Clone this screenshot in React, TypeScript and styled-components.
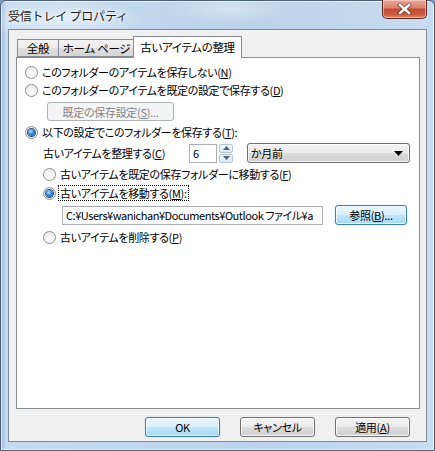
import React from "react";
import styled, { createGlobalStyle } from "styled-components";

const Global = createGlobalStyle`
  html, body { margin: 0; padding: 0; background: #7d9bbd; }
  body { width: 435px; height: 451px; overflow: hidden; }
  * { box-sizing: border-box; }
`;

const UI = `"Noto Sans CJK JP", "Noto Sans", sans-serif`;

const Win = styled.div`
  width: 435px;
  height: 451px;
  display: flex;
  flex-direction: column;
  padding: 0 7px 8px 7px;
  border: 1px solid #4e6176;
  border-radius: 6px 6px 0 0;
  background:
    radial-gradient(ellipse 120px 30px at 60px 18px, rgba(255,255,255,0.55), rgba(255,255,255,0) 70%),
    radial-gradient(ellipse 90px 20px at 230px 8px, rgba(255,255,255,0.35), rgba(255,255,255,0) 70%),
    linear-gradient(90deg, #9fbcdc 0px, #c6dbef 5px, #bcd3ea 60%, #c8dcf0 100%);
  box-shadow: inset 0 0 0 1px rgba(255,255,255,0.6);
`;

const TitleBar = styled.div`
  height: 28px;
  display: flex;
  align-items: flex-start;
  justify-content: space-between;
`;

const Title = styled.div`
  font-family: ${UI};
  font-size: 12px;
  color: #1b1b1b;
  padding-top: 6px;
  text-shadow: 0 0 6px #ffffff, 0 0 3px #ffffff;
  letter-spacing: -0.2px;
`;

const CloseBtn = styled.div`
  width: 45px;
  height: 19px;
  margin-top: -1px;
  border: 1px solid #5e2a22;
  border-top: none;
  border-radius: 0 0 5px 5px;
  background: linear-gradient(180deg, #e9a899 0%, #d9806d 45%, #c24a33 50%, #cc5a3f 80%, #e08a6a 100%);
  box-shadow: inset 0 0 0 1px rgba(255,220,210,0.55);
  display: flex;
  align-items: center;
  justify-content: center;
`;

const Client = styled.div`
  flex: 1;
  background: #f0f0f0;
  border: 1px solid #7f8b99;
  display: flex;
  flex-direction: column;
  padding: 6px 7px 0 7px;
`;

const TabStrip = styled.div`
  display: flex;
  align-items: flex-end;
  height: 21px;
  padding-left: 1px;
  position: relative;
  z-index: 1;
`;

const Tab = styled.div<{ $w: number; $active?: boolean }>`
  width: ${(p) => p.$w}px;
  height: ${(p) => (p.$active ? 22 : 18)}px;
  margin-bottom: ${(p) => (p.$active ? -1 : 0)}px;
  margin-left: ${(p) => (p.$active ? -1 : 0)}px;
  border: 1px solid #898c95;
  border-bottom: ${(p) => (p.$active ? "none" : "1px solid #898c95")};
  border-right-width: ${(p) => (p.$active ? 1 : 0)}px;
  background: ${(p) =>
    p.$active ? "#ffffff" : "linear-gradient(180deg, #f3f3f3 0%, #ebebeb 50%, #dedede 51%, #d6d6d6 100%)"};
  font-family: ${UI};
  font-size: 11.5px;
  letter-spacing: -0.3px;
  color: #000;
  display: flex;
  align-items: ${(p) => (p.$active ? "flex-start" : "center")};
  padding-top: ${(p) => (p.$active ? 2 : 0)}px;
  justify-content: center;
  font-feature-settings: "palt";
  white-space: nowrap;
  &:nth-child(2) { border-right-width: 0; }
`;

const Pane = styled.div`
  width: 404px;
  height: 352px;
  background: #ffffff;
  border: 1px solid #898c95;
  padding: 5px 0 0 8px;
  display: flex;
  flex-direction: column;
  font-family: ${UI};
  font-size: 11px;
  letter-spacing: -0.35px;
  color: #000;
  font-feature-settings: "palt";
`;

const Row = styled.div<{ $indent?: number; $mt?: number; $h?: number }>`
  display: flex;
  align-items: center;
  height: ${(p) => p.$h ?? 18}px;
  margin-left: ${(p) => p.$indent ?? 0}px;
  margin-top: ${(p) => p.$mt ?? 0}px;
  white-space: nowrap;
`;

const RadioCircle = styled.span<{ $on?: boolean }>`
  width: 13px;
  height: 13px;
  border-radius: 50%;
  flex: none;
  border: 1px solid #8f8f8f;
  background: radial-gradient(circle at 50% 60%, #ffffff 0%, #f4f4f4 40%, #d2d2d2 100%);
  box-shadow: inset 0 0 0 1px #f8f8f8;
  display: flex;
  align-items: center;
  justify-content: center;
  margin-right: 3px;
  &::after {
    content: "";
    display: ${(p) => (p.$on ? "block" : "none")};
    width: 7px;
    height: 7px;
    border-radius: 50%;
    background: radial-gradient(circle at 40% 35%, #b9e2ff 0%, #3c8fe0 40%, #0d4a8a 100%);
    box-shadow: 0 0 0 1px #1e4f85;
  }
`;

const Label = styled.span<{ $focus?: boolean }>`
  line-height: 14px;
  padding: 0 1px;
  outline: ${(p) => (p.$focus ? "1px dotted #000" : "none")};
`;

const Key = styled.span`
  text-decoration: underline;
  text-underline-offset: 1px;
`;

const PushButton = styled.div<{ $w: number; $kind?: "normal" | "default" | "disabled"; $h?: number; $ml?: number }>`
  width: ${(p) => p.$w}px;
  height: ${(p) => p.$h ?? 20}px;
  margin-left: ${(p) => p.$ml ?? 0}px;
  flex: none;
  border-radius: 3px;
  font-family: ${UI};
  font-size: 11px;
  letter-spacing: -0.3px;
  font-feature-settings: "palt";
  display: flex;
  align-items: center;
  justify-content: center;
  white-space: nowrap;
  ${(p) =>
    p.$kind === "disabled"
      ? `border: 1px solid #adb2b5; background: #f4f4f4; color: #838383;`
      : p.$kind === "default"
      ? `border: 1px solid #3c7fb1; color: #000; background: linear-gradient(180deg, #eaf6fd 0%, #d9f0fc 50%, #bee6fd 51%, #a7d9f5 100%); box-shadow: inset 0 0 0 1px rgba(255,255,255,0.7), 0 0 1px #48c7ff;`
      : `border: 1px solid #707070; color: #000; background: linear-gradient(180deg, #f2f2f2 0%, #ebebeb 50%, #dddddd 51%, #cfcfcf 100%); box-shadow: inset 0 0 0 1px rgba(255,255,255,0.8);`}
`;

const OrganizeLabel = styled.span`
  width: 146px;
  flex: none;
`;

const TextBox = styled.div<{ $w: number }>`
  width: ${(p) => p.$w}px;
  height: 19px;
  flex: none;
  border: 1px solid #abadb3;
  background: #fff;
  display: flex;
  align-items: center;
  padding-left: 3px;
  overflow: hidden;
  white-space: nowrap;
`;

const PathText = styled.span`
  font-size: 11px;
  letter-spacing: -0.45px;
`;

const Spinner = styled.div`
  width: 14px;
  height: 19px;
  margin-left: 2px;
  flex: none;
  display: flex;
  flex-direction: column;
  gap: 1px;
`;

const SpinPart = styled.div`
  flex: 1;
  border: 1px solid #b5c4d6;
  border-radius: 2px;
  background: linear-gradient(180deg, #f3f8fc 0%, #dbe8f4 100%);
  display: flex;
  align-items: center;
  justify-content: center;
`;

const Combo = styled.div`
  width: 163px;
  height: 20px;
  margin-left: 14px;
  flex: none;
  border: 1px solid #707070;
  border-radius: 3px;
  background: linear-gradient(180deg, #f2f2f2 0%, #ebebeb 50%, #dddddd 51%, #cfcfcf 100%);
  box-shadow: inset 0 0 0 1px rgba(255,255,255,0.8);
  display: flex;
  align-items: center;
  justify-content: space-between;
  padding: 0 6px 0 3px;
`;

const ButtonBar = styled.div`
  display: flex;
  justify-content: flex-end;
  gap: 20px;
  padding-top: 8px;
  padding-right: 9px;
`;

const Radio = ({ on, children, indent, mt, focus }: { on?: boolean; children: React.ReactNode; indent?: number; mt?: number; focus?: boolean }) => (
  <Row $indent={indent} $mt={mt}>
    <RadioCircle $on={on} />
    <Label $focus={focus}>{children}</Label>
  </Row>
);

export default function App() {
  return (
    <>
      <Global />
      <Win>
        <TitleBar>
          <Title>受信トレイ プロパティ</Title>
          <CloseBtn>
            <svg width="15" height="12" viewBox="0 0 15 12">
              <path d="M3 2 L12 10 M12 2 L3 10" stroke="#4a2018" strokeWidth="4.4" strokeLinecap="square" fill="none" opacity="0.5" />
              <path d="M3 2 L12 10 M12 2 L3 10" stroke="#ffffff" strokeWidth="2.4" strokeLinecap="square" fill="none" />
            </svg>
          </CloseBtn>
        </TitleBar>
        <Client>
          <TabStrip>
            <Tab $w={41}>全般</Tab>
            <Tab $w={76}>ホーム ページ</Tab>
            <Tab $w={109} $active>古いアイテムの整理</Tab>
          </TabStrip>
          <Pane>
            <Radio>このフォルダーのアイテムを保存しない(<Key>N</Key>)</Radio>
            <Radio>このフォルダーのアイテムを既定の設定で保存する(<Key>D</Key>)</Radio>
            <Row $indent={22} $mt={3} $h={19}>
              <PushButton $w={127} $h={19} $kind="disabled">既定の保存設定(<Key>S</Key>)...</PushButton>
            </Row>
            <Radio on mt={2}>以下の設定でこのフォルダーを保存する(<Key>T</Key>):</Radio>
            <Row $indent={18} $mt={2} $h={20}>
              <OrganizeLabel>古いアイテムを整理する(<Key>C</Key>)</OrganizeLabel>
              <TextBox $w={28}>6</TextBox>
              <Spinner>
                <SpinPart>
                  <svg width="7" height="4" viewBox="0 0 7 4"><path d="M0 4 L3.5 0 L7 4 Z" fill="#4d6185" /></svg>
                </SpinPart>
                <SpinPart>
                  <svg width="7" height="4" viewBox="0 0 7 4"><path d="M0 0 L3.5 4 L7 0 Z" fill="#4d6185" /></svg>
                </SpinPart>
              </Spinner>
              <Combo>
                <span>か月前</span>
                <svg width="9" height="5" viewBox="0 0 9 5"><path d="M0 0 L9 0 L4.5 5 Z" fill="#000" /></svg>
              </Combo>
            </Row>
            <Radio indent={18} mt={2}>古いアイテムを既定の保存フォルダーに移動する(<Key>F</Key>)</Radio>
            <Radio on indent={18} mt={1} focus>古いアイテムを移動する(<Key>M</Key>):</Radio>
            <Row $indent={37} $mt={3} $h={20}>
              <TextBox $w={261}>
                <PathText>C:¥Users¥wanichan¥Documents¥Outlook ファイル¥a</PathText>
              </TextBox>
              <PushButton $w={72} $kind="default" $ml={12}>参照(<Key>B</Key>)...</PushButton>
            </Row>
            <Radio indent={18} mt={3}>古いアイテムを削除する(<Key>P</Key>)</Radio>
          </Pane>
          <ButtonBar>
            <PushButton $w={75} $kind="default">OK</PushButton>
            <PushButton $w={75}>キャンセル</PushButton>
            <PushButton $w={75}>適用(<Key>A</Key>)</PushButton>
          </ButtonBar>
        </Client>
      </Win>
    </>
  );
}
